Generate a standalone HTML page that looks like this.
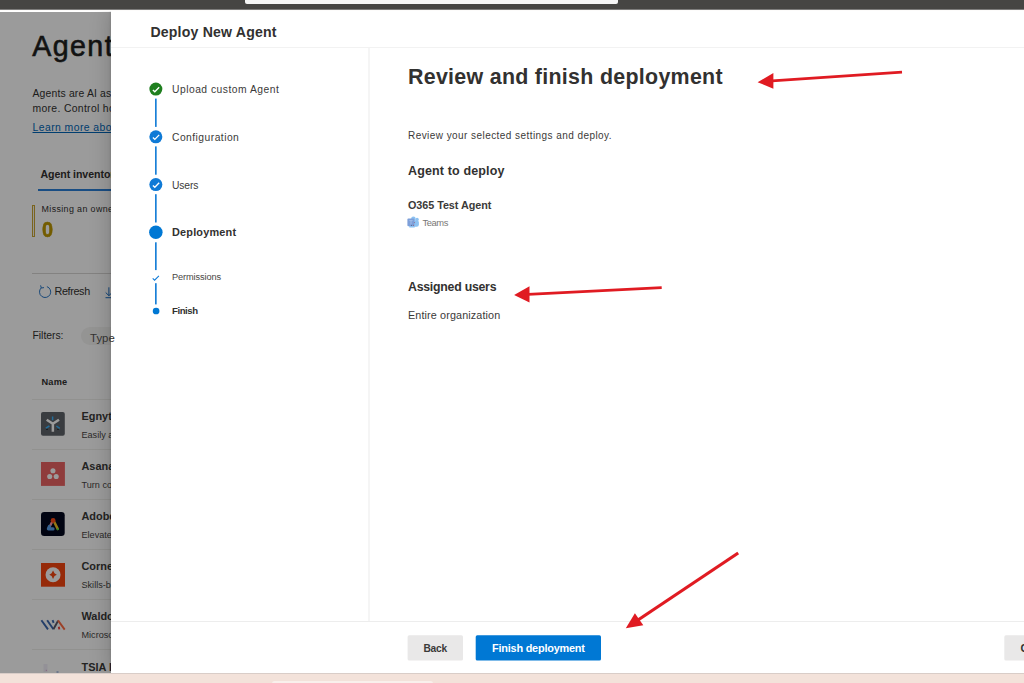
<!DOCTYPE html>
<html><head><meta charset="utf-8"><title>Deploy New Agent</title>
<style>
html,body{margin:0;padding:0;}
body{width:1024px;height:683px;overflow:hidden;position:relative;background:#ffffff;font-family:"Liberation Sans",sans-serif;}
.t{position:absolute;white-space:nowrap;display:block;}
.a{position:absolute;display:block;}
.hl{position:absolute;height:1px;background:#e1dfdd;}
</style></head>
<body>
<!-- ================= background page ================= -->
<div class="a" id="bgclip" style="left:0;top:12px;width:1024px;height:661px;overflow:hidden;background:#ffffff;">
<div class="a" style="left:0;top:-12px;width:1024px;height:683px;">
<span class="t" id="h_agents" style="left:32.20px;top:32.00px;font-size:28.6px;line-height:28.6px;color:#201f1e;letter-spacing:1.426px;-webkit-text-stroke:0.6px #201f1e;">Agents</span>
<span class="t" id="d1" style="left:32.50px;top:89.00px;font-size:10.4px;line-height:10.4px;color:#323130;letter-spacing:0.168px;">Agents are AI assistants that</span>
<span class="t" id="d2" style="left:32.50px;top:104.00px;font-size:10.4px;line-height:10.4px;color:#323130;letter-spacing:0.322px;">more. Control how they work</span>
<span class="t" id="d3" style="left:32.50px;top:123.00px;font-size:10.4px;line-height:10.4px;color:#0067b8;letter-spacing:0.441px;text-decoration:underline;text-underline-offset:0.5px;">Learn more about agents</span>
<span class="t" id="tab" style="left:40.40px;top:169.00px;font-size:10.6px;line-height:10.6px;color:#323130;font-weight:bold;letter-spacing:-0.051px;">Agent inventory</span>
<span class="t" id="miss" style="left:41.50px;top:205.00px;font-size:8.9px;line-height:8.9px;color:#323130;letter-spacing:0.381px;">Missing an owner</span>
<span class="t" id="zero" style="left:42.00px;top:219.00px;font-size:22.6px;line-height:22.6px;color:#bd9700;font-weight:bold;-webkit-text-stroke:0.6px #bd9700;letter-spacing:0;transform:scaleX(0.88);transform-origin:0 0;">0</span>
<span class="t" id="refresh" style="left:54.50px;top:286.00px;font-size:10.8px;line-height:10.8px;color:#323130;letter-spacing:-0.359px;">Refresh</span>
<span class="t" id="filters" style="left:32.50px;top:331.00px;font-size:10.4px;line-height:10.4px;color:#323130;letter-spacing:-0.025px;">Filters:</span>
<span class="t" id="type" style="left:90.10px;top:333.00px;font-size:11.4px;line-height:11.4px;color:#323130;z-index:2;">Type</span>
<span class="t" id="name" style="left:41.50px;top:378.00px;font-size:9.2px;line-height:9.2px;color:#323130;font-weight:bold;letter-spacing:0.236px;">Name</span>
<span class="t" id="rn0" style="left:81.50px;top:411.00px;font-size:10.9px;line-height:10.9px;color:#3b3a39;font-weight:bold;">Egnyte</span>
<span class="t" id="rd0" style="left:81.50px;top:431.00px;font-size:9.1px;line-height:9.1px;color:#484644;">Easily access</span>
<span class="t" id="rn1" style="left:81.50px;top:461.00px;font-size:10.9px;line-height:10.9px;color:#3b3a39;font-weight:bold;">Asana</span>
<span class="t" id="rd1" style="left:81.50px;top:481.00px;font-size:9.1px;line-height:9.1px;color:#484644;">Turn conversations</span>
<span class="t" id="rn2" style="left:81.50px;top:511.00px;font-size:10.9px;line-height:10.9px;color:#3b3a39;font-weight:bold;">Adobe Express</span>
<span class="t" id="rd2" style="left:81.50px;top:531.00px;font-size:9.1px;line-height:9.1px;color:#484644;">Elevate your</span>
<span class="t" id="rn3" style="left:81.50px;top:561.00px;font-size:10.9px;line-height:10.9px;color:#3b3a39;font-weight:bold;">Cornerstone</span>
<span class="t" id="rd3" style="left:81.50px;top:581.00px;font-size:9.1px;line-height:9.1px;color:#484644;">Skills-based</span>
<span class="t" id="rn4" style="left:81.50px;top:611.00px;font-size:10.9px;line-height:10.9px;color:#3b3a39;font-weight:bold;">Waldo</span>
<span class="t" id="rd4" style="left:81.50px;top:631.00px;font-size:9.1px;line-height:9.1px;color:#484644;">Microsoft</span>
<span class="t" id="rn5" style="left:81.50px;top:662.00px;font-size:10.9px;line-height:10.9px;color:#3b3a39;font-weight:bold;">TSIA Intelligence</span>

<!-- tab underline -->
<div class="a" style="left:38px;top:189px;width:80px;height:2px;background:#2a7fd8;"></div>
<!-- missing-owner bar -->
<div class="a" style="left:32px;top:205px;width:3px;height:32px;box-sizing:border-box;border:1px solid #c9a532;background:#f6f5f4;"></div>
<!-- dividers -->
<div class="hl" style="left:32px;top:273px;width:90px;background:#d8d6d4;"></div>
<div class="hl" style="left:32px;top:399px;width:90px;background:#efeeec;"></div>
<div class="hl" style="left:32px;top:449px;width:90px;background:#efeeec;"></div>
<div class="hl" style="left:32px;top:499px;width:90px;background:#efeeec;"></div>
<div class="hl" style="left:32px;top:549px;width:90px;background:#efeeec;"></div>
<div class="hl" style="left:32px;top:599px;width:90px;background:#efeeec;"></div>
<div class="hl" style="left:32px;top:649px;width:90px;background:#efeeec;"></div>
<!-- refresh icon -->
<svg class="a" style="left:37.5px;top:284.5px;" width="14" height="14" viewBox="0 0 14 14"><path d="M8.9 1.6 A5.6 5.6 0 1 1 3.2 2.9" fill="none" stroke="#1c6fc4" stroke-width="0.95"/><path d="M2.6 0.4 L3.3 3 L6 2.6" fill="none" stroke="#1c6fc4" stroke-width="0.95"/></svg>
<!-- download icon -->
<svg class="a" style="left:100px;top:282px;" width="20" height="20" viewBox="100 282 20 20"><path d="M108.9 287.3 V295.6 M105.7 292.5 L108.9 295.7 L112.1 292.5 M105.5 297.7 H113" fill="none" stroke="#1c6fc4" stroke-width="1"/></svg>
<!-- type pill -->
<div class="a" style="left:80.5px;top:327.3px;width:60px;height:18px;border-radius:9px;background:#f4f3f2;"></div>
<!-- app icons -->
<svg class="a" style="left:41.4px;top:412.3px;" width="24" height="24" viewBox="0 0 24 24"><rect width="23.8" height="23.7" rx="2" fill="#5f636a"/><path d="M11.86 11.2 V19.7 M11.86 11.8 L5.7 7.7 M11.86 11.8 L18 7.7" stroke="#ffffff" stroke-width="2.5" fill="none"/><path d="M11.6 4.6 V8.2 M4.8 16.1 L8.4 14 M18.7 16.3 L15.4 14" stroke="#3ab5ff" stroke-width="1.5" fill="none"/><circle cx="6" cy="17.3" r="0.6" fill="#000"/><circle cx="17" cy="17.3" r="0.6" fill="#000"/></svg>
<svg class="a" style="left:41.3px;top:462.45px;" width="24" height="24" viewBox="0 0 24 24"><rect width="23.9" height="23.9" fill="#ec6363"/><circle cx="11.95" cy="8.7" r="2.55" fill="#fff"/><circle cx="8.7" cy="14.5" r="2.55" fill="#fff"/><circle cx="15.2" cy="14.5" r="2.55" fill="#fff"/></svg>
<svg class="a" style="left:41.3px;top:512.4px;" width="24" height="24" viewBox="0 0 24 24"><rect width="23.7" height="24" rx="3.3" fill="#03081e"/><path d="M12.9 9.2 L16.7 16.9" stroke="#f2c324" stroke-width="2.5" fill="none" stroke-linecap="round"/><circle cx="16.7" cy="17.2" r="1" fill="#35f045"/><path d="M11.3 9.6 L8.8 14.6" stroke="#ff98aa" stroke-width="2.3" fill="none" stroke-linecap="round"/><path d="M8.4 14.4 L7.4 16.6 M7.4 16.8 L12 16.9" stroke="#5aa2ee" stroke-width="3.2" fill="none" stroke-linecap="round"/><circle cx="12.1" cy="8.5" r="2.4" fill="#ff4a14"/></svg>
<svg class="a" style="left:41.2px;top:562.9px;" width="24" height="24" viewBox="0 0 24 24"><rect width="24" height="23.7" fill="#f74510"/><circle cx="12.04" cy="11.7" r="7.5" fill="#ffffff"/><path d="M12.04 7.5 L13.5 10.3 L15.8 11.7 L13.5 13.1 L12.04 15.9 L10.6 13.1 L8.3 11.7 L10.6 10.3 Z" fill="#f74510"/></svg>
<svg class="a" style="left:36px;top:606px;" width="36" height="36" viewBox="36 606 36 36"><g fill="none" stroke-width="1.9"><path d="M41.4 620.2 L48 629.4" stroke="#3a66ad"/><path d="M47.2 620.2 L53.4 629.2" stroke="#3a66ad"/><path d="M52.6 620.2 L53.6 622.8" stroke="#3a66ad"/><path d="M53.4 629.2 L58.1 620.8" stroke="#5a5868"/><path d="M58 620.4 L64.7 629.6" stroke="#ff6b42"/><path d="M58.8 626.8 L59.3 629.4" stroke="#f0403a"/></g></svg>
<svg class="a" style="left:41.3px;top:662.6px;" width="24" height="12" viewBox="0 0 24 12"><rect x="2.5" y="1" width="4" height="8" fill="#e6e0f4" opacity=".5"/><rect x="15.5" y="8.4" width="2" height="1.2" fill="#1f4fb0" opacity=".55"/><rect x="4.8" y="6.8" width="1.1" height="1.1" fill="#c0399a" opacity=".4"/></svg>
</div>
<!-- overlay -->
<div class="a" style="left:0;top:0;width:1024px;height:661px;background:rgba(0,0,0,0.392);"></div>
</div>

<!-- ================= panel ================= -->
<div class="a" id="panel" style="left:111px;top:11px;width:913px;height:662px;background:#ffffff;box-shadow:-3px 0 18px 0 rgba(0,0,0,0.17), -1px 0 2px rgba(0,0,0,0.07);"></div>
<div class="hl" style="left:111px;top:47px;width:913px;background:#f2f2f2;"></div>
<div class="hl" style="left:111px;top:621px;width:913px;background:#ededed;"></div>
<div class="a" style="left:368px;top:48px;width:2px;height:573px;background:#f5f5f5;"></div>

<!-- stepper lines + circles -->
<svg class="a" style="left:140px;top:70px;" width="40" height="260" viewBox="140 70 40 260">
<g fill="#0f7ad6">
<rect x="155.05" y="98.6" width="1.6" height="28.3"/>
<rect x="155.05" y="146.4" width="1.6" height="28.3"/>
<rect x="155.05" y="194.2" width="1.6" height="28.3"/>
<rect x="155.05" y="242.3" width="1.6" height="27.8"/>
<rect x="155.05" y="283.2" width="1.6" height="21.2"/>
</g>
<circle cx="155.85" cy="89.1" r="6.5" fill="#1f7f1f"/>
<circle cx="155.85" cy="136.8" r="6.5" fill="#0f7ad6"/>
<circle cx="155.85" cy="184.6" r="6.5" fill="#0f7ad6"/>
<circle cx="155.85" cy="232.3" r="6.75" fill="#0078d4"/>
<circle cx="156.1" cy="311" r="3.35" fill="#0078d4"/>
<g fill="none" stroke="#ffffff" stroke-width="1.35">
<path d="M152.9 89.9 L154.8 91.7 L159.2 87.2"/>
<path d="M152.9 137.6 L154.8 139.4 L159.2 134.9"/>
<path d="M152.9 185.4 L154.8 187.2 L159.2 182.7"/>
</g>
<path d="M152.7 278.3 L154.6 280.2 L158.9 275.8" fill="none" stroke="#0f7ad6" stroke-width="1.05"/>
</svg>

<!-- teams icon -->
<svg class="a" style="left:405px;top:214px;" width="16" height="16" viewBox="405 214 16 16">
<defs><filter id="tb" x="-30%" y="-30%" width="160%" height="160%"><feGaussianBlur stdDeviation="0.45"/></filter></defs>
<g filter="url(#tb)">
<circle cx="413.4" cy="218.9" r="2.3" fill="#8cc2f2"/>
<circle cx="417.1" cy="219.4" r="1.7" fill="#8cc2f2"/>
<rect x="412" y="220.2" width="6.9" height="6.6" rx="2.2" fill="#8cc2f2"/>
<rect x="407.4" y="218.6" width="7" height="7.6" rx="1" fill="#7d9fd9"/>
<rect x="409" y="226" width="6" height="1.4" rx="0.7" fill="#8cc2f2"/>
<path d="M409.3 220.6 H412.7 M411 220.6 V224.6" stroke="#a9c4ee" stroke-width="0.8" fill="none"/>
<circle cx="414.4" cy="222.4" r="0.45" fill="#a33"/>
<circle cx="413.5" cy="225.2" r="0.45" fill="#a33"/>
<circle cx="411.5" cy="225.3" r="0.45" fill="#234"/>
</g>
</svg>

<!-- buttons -->
<svg class="a" style="left:400px;top:630px;" width="624" height="36" viewBox="400 630 624 36">
<rect x="407.6" y="635.35" width="55.4" height="25.25" rx="1.6" fill="#e9e8e8"/>
<rect x="475.7" y="635.35" width="125.3" height="25.25" rx="1.6" fill="#0078d4"/>
<rect x="1004.3" y="635.35" width="40" height="25.25" rx="1.6" fill="#e9e8e8"/>
</svg>
<span class="t" id="ptitle" style="left:150.40px;top:25.00px;font-size:14.1px;line-height:14.1px;color:#323130;font-weight:bold;letter-spacing:0.196px;">Deploy New Agent</span>
<span class="t" id="s1" style="left:172.00px;top:85.00px;font-size:10.3px;line-height:10.3px;color:#3b3a39;letter-spacing:0.494px;">Upload custom Agent</span>
<span class="t" id="s2" style="left:172.00px;top:133.00px;font-size:10.3px;line-height:10.3px;color:#3b3a39;letter-spacing:0.464px;">Configuration</span>
<span class="t" id="s3" style="left:172.00px;top:181.00px;font-size:10.3px;line-height:10.3px;color:#3b3a39;letter-spacing:-0.139px;">Users</span>
<span class="t" id="s4" style="left:172.00px;top:227.00px;font-size:10.9px;line-height:10.9px;color:#323130;font-weight:bold;letter-spacing:0.192px;">Deployment</span>
<span class="t" id="s5" style="left:172.00px;top:273.00px;font-size:9.2px;line-height:9.2px;color:#484644;letter-spacing:-0.082px;">Permissions</span>
<span class="t" id="s6" style="left:172.00px;top:306.00px;font-size:9.6px;line-height:9.6px;color:#323130;font-weight:bold;letter-spacing:-0.444px;">Finish</span>
<span class="t" id="h1" style="left:408.00px;top:67.00px;font-size:21.4px;line-height:21.4px;color:#323130;font-weight:bold;letter-spacing:0.293px;">Review and finish deployment</span>
<span class="t" id="sub" style="left:408.00px;top:131.00px;font-size:10.0px;line-height:10.0px;color:#3b3a39;letter-spacing:0.438px;">Review your selected settings and deploy.</span>
<span class="t" id="h2" style="left:408.00px;top:165.00px;font-size:12.5px;line-height:12.5px;color:#323130;font-weight:bold;letter-spacing:0.144px;">Agent to deploy</span>
<span class="t" id="agent" style="left:408.00px;top:200.00px;font-size:10.8px;line-height:10.8px;color:#3b3a39;font-weight:bold;letter-spacing:-0.048px;">O365 Test Agent</span>
<span class="t" id="teams" style="left:422.40px;top:218.00px;font-size:9.4px;line-height:9.4px;color:#797775;letter-spacing:-0.417px;">Teams</span>
<span class="t" id="h3" style="left:408.00px;top:281.00px;font-size:12.3px;line-height:12.3px;color:#323130;font-weight:bold;letter-spacing:-0.236px;">Assigned users</span>
<span class="t" id="org" style="left:408.00px;top:310.00px;font-size:10.8px;line-height:10.8px;color:#3b3a39;letter-spacing:0.123px;">Entire organization</span>
<span class="t" id="back" style="left:423.40px;top:644.00px;font-size:10.2px;line-height:10.2px;color:#3b3a39;font-weight:bold;letter-spacing:-0.196px;">Back</span>
<span class="t" id="fin" style="left:492.00px;top:643.00px;font-size:10.9px;line-height:10.9px;color:#ffffff;font-weight:bold;letter-spacing:-0.205px;">Finish deployment</span>
<span class="t" id="cancel" style="left:1020.40px;top:643.00px;font-size:10.9px;line-height:10.9px;color:#323130;font-weight:bold;">Cancel</span>


<!-- red arrows -->
<svg class="a" style="left:0;top:0;" width="1024" height="683" viewBox="0 0 1024 683">
<g fill="#e01b22" stroke="none">
<polygon points="757.6,82.2 773.4,73.1 773.4,88.7"/>
<polygon points="514.1,295 529.5,286.3 529.5,302.5"/>
<polygon points="625.8,628.3 634.9,613.2 643.3,625.2"/>
</g>
<g stroke="#e01b22" stroke-width="2.8" fill="none">
<line x1="772" y1="80.9" x2="902" y2="72.1"/>
<line x1="528" y1="294.4" x2="661.7" y2="287.7"/>
</g>
<line x1="638" y1="620" x2="738.2" y2="553" stroke="#e01b22" stroke-width="3.2"/>
</svg>

<!-- ================= top bar ================= -->
<div class="a" style="left:0;top:0;width:1024px;height:9px;background:#464543;"></div>
<div class="a" style="left:0;top:9px;width:1024px;height:1px;background:#7d7c7b;"></div>
<div class="a" style="left:0;top:10px;width:1024px;height:1px;background:#fdfcfb;"></div>
<div class="a" style="left:245px;top:-2px;width:372.5px;height:6px;border-radius:2px;background:#f6f6f6;"></div>

<!-- ================= bottom strip ================= -->
<div class="a" style="left:0;top:673px;width:1024px;height:10px;background:#f3e2da;"></div>
<div class="a" style="left:0;top:672.5px;width:1024px;height:1px;background:#d9cdc8;"></div>
<div class="a" style="left:271.5px;top:681px;width:161px;height:6px;border-radius:2.5px;background:#f9f0ec;"></div>
</body></html>
